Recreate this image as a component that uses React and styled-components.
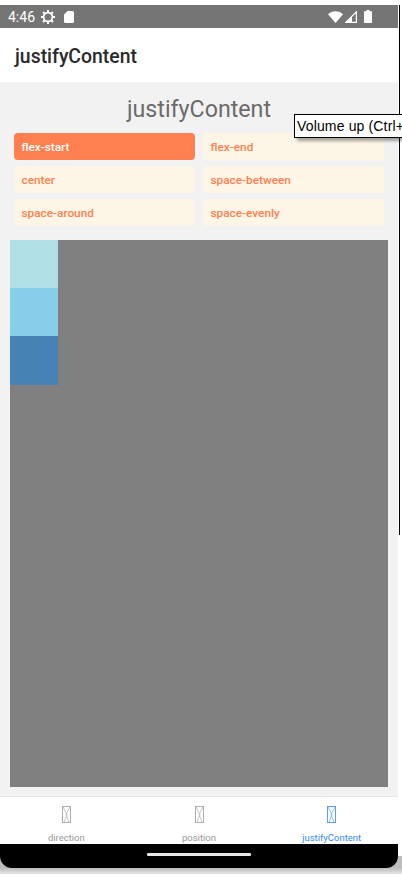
import React from 'react';
import styled, { createGlobalStyle } from 'styled-components';

const GlobalStyle = createGlobalStyle`
  html, body {
    margin: 0;
    padding: 0;
    background: #fff;
  }
  body {
    font-family: Roboto, "Noto Sans", sans-serif;
  }
`;

const Screen = styled.div`
  position: relative;
  width: 402px;
  height: 874px;
  overflow: hidden;
  background: linear-gradient(#fff 0, #fff 856px, #bdbdbd 856px, #bdbdbd 868px, #e4e4e4 874px);
`;

const Phone = styled.div`
  display: flex;
  flex-direction: column;
  width: 398px;
  height: 868px;
  padding-top: 5px;
  box-sizing: border-box;
`;

const StatusBar = styled.div`
  display: flex;
  align-items: center;
  justify-content: space-between;
  height: 23px;
  padding: 0 26px 0 8px;
  background: #757575;
  color: #fff;
  flex: none;
`;

const StatusGroup = styled.div`
  display: flex;
  align-items: center;
  gap: ${(p) => p.$gap}px;
`;

const Clock = styled.span`
  font-size: 14px;
`;

const Header = styled.header`
  display: flex;
  align-items: center;
  height: 54px;
  padding: 2px 0 0 15px;
  box-sizing: border-box;
  background: #fff;
  flex: none;
`;

const HeaderTitle = styled.h1`
  margin: 0;
  font-size: 19.4px;
  font-weight: 500;
  color: #2a2a2c;
`;

const Content = styled.main`
  display: flex;
  flex-direction: column;
  flex: 1;
  min-height: 0;
  background: #f2f2f2;
  padding: 0 10px 9px;
`;

const Title = styled.div`
  text-align: center;
  font-size: 23.2px;
  line-height: 28px;
  height: 28px;
  margin: 13px 0 10px;
  color: #6b6b6b;
`;

const Options = styled.div`
  display: grid;
  grid-template-columns: 181px 181px;
  grid-auto-rows: 27px;
  column-gap: 8px;
  row-gap: 6px;
  padding-left: 4px;
  margin-bottom: 14px;
`;

const Option = styled.div`
  display: flex;
  align-items: center;
  padding-left: 7.5px;
  border-radius: 4px;
  font-size: 11.8px;
  font-weight: 500;
  background: ${(p) => (p.$selected ? 'coral' : 'oldlace')};
  color: ${(p) => (p.$selected ? '#fff' : 'coral')};
`;

const Stage = styled.div`
  display: flex;
  flex-direction: column;
  flex: 1;
  background: #808080;
`;

const Block = styled.div`
  width: 48px;
  height: ${(p) => p.$height}px;
  background: ${(p) => p.$color};
`;

const TabBar = styled.nav`
  display: flex;
  height: 48px;
  background: #fff;
  border-top: 1px solid #e4e4e4;
  box-sizing: border-box;
  flex: none;
`;

const Tab = styled.div`
  display: flex;
  flex-direction: column;
  align-items: center;
  flex: 1;
  padding-top: 9px;
  color: ${(p) => (p.$active ? '#2f8cf5' : '#999')};
`;

const TabLabel = styled.span`
  margin-top: 9px;
  font-size: 9.5px;
  line-height: 12px;
`;

const NavBar = styled.div`
  display: flex;
  justify-content: center;
  height: 24px;
  padding-top: 9px;
  box-sizing: border-box;
  background: #000;
  border-radius: 0 0 12px 12px;
  flex: none;
`;

const HomePill = styled.div`
  width: 104px;
  height: 3px;
  background: #e8e8e8;
  border-radius: 1px;
`;

const WindowEdge = styled.div`
  position: absolute;
  left: 399px;
  top: 5px;
  width: 1px;
  height: 530px;
  background: #000;
`;

const Tooltip = styled.div`
  position: absolute;
  left: 294px;
  top: 114px;
  width: 120px;
  height: 24px;
  padding-left: 2px;
  box-sizing: border-box;
  border: 1px solid #000;
  background: #fff;
  box-shadow: 3px 3px 3px rgba(0, 0, 0, 0.35);
  font-family: "Liberation Sans", Arial, sans-serif;
  font-size: 14px;
  letter-spacing: 0.15px;
  line-height: 22px;
  color: #000;
  white-space: nowrap;
`;

const SdSvg = styled.svg`
  margin-left: 3px;
`;

const BatterySvg = styled.svg`
  margin-left: 5px;
`;

const MissingIcon = () => (
  <svg width="9" height="17" viewBox="0 0 9 17" fill="none" stroke="currentColor" strokeWidth="1" opacity="0.8">
    <rect x="0.5" y="0.5" width="8" height="16" />
    <path d="M1 1 L5 8.5 L2 16 M8 1 L4 8.5 L7 16" strokeWidth="0.7" />
  </svg>
);

const GearIcon = () => (
  <svg width="14" height="14" viewBox="0 0 14 14" fill="none" stroke="#fff">
    <circle cx="7" cy="7" r="4.4" strokeWidth="1.8" />
    <path d="M7 0v2M7 12v2M0 7h2M12 7h2M2 2l1.500 1.500M10.500 10.500L12 12M2 12l1.500-1.500M10.500 3.500L12 2" strokeWidth="2" />
  </svg>
);

const SdIcon = () => (
  <SdSvg width="10" height="12" viewBox="0 0 10 12" fill="#fff">
    <path d="M3.500 0h5A1.500 1.500 0 0 1 10 1.500v9A1.500 1.500 0 0 1 8.500 12h-7A1.500 1.500 0 0 1 0 10.500V3.500z" />
  </SdSvg>
);

const WifiIcon = () => (
  <svg width="15" height="12" viewBox="0 0 15 12" fill="#fff">
    <path d="M0 3.200C4-0.900 11-0.900 15 3.200L7.500 12z" />
  </svg>
);

const SignalIcon = () => (
  <svg width="12" height="12" viewBox="0 0 12 12">
    <path d="M11.400 0.800V11.400H0.800z" fill="none" stroke="#fff" strokeWidth="1.200" />
    <path d="M7 5.500V12H0.800z" fill="#fff" />
  </svg>
);

const BatteryIcon = () => (
  <BatterySvg width="8" height="13" viewBox="0 0 8 13" fill="#fff">
    <path d="M2.500 0h3v1.200H8V13H0V1.200h2.500z" />
  </BatterySvg>
);

const options = ['flex-start', 'flex-end', 'center', 'space-between', 'space-around', 'space-evenly'];
const blocks = [
  { color: 'powderblue', height: 48 },
  { color: 'skyblue', height: 48 },
  { color: 'steelblue', height: 49 },
];
const tabs = ['direction', 'position', 'justifyContent'];

export default function App() {
  return (
    <Screen>
      <GlobalStyle />
      <Phone>
        <StatusBar>
          <StatusGroup $gap={6}>
            <Clock>4:46</Clock>
            <GearIcon />
            <SdIcon />
          </StatusGroup>
          <StatusGroup $gap={2}>
            <WifiIcon />
            <SignalIcon />
            <BatteryIcon />
          </StatusGroup>
        </StatusBar>
        <Header>
          <HeaderTitle>justifyContent</HeaderTitle>
        </Header>
        <Content>
          <Title>justifyContent</Title>
          <Options>
            {options.map((o) => (
              <Option key={o} $selected={o === 'flex-start'}>{o}</Option>
            ))}
          </Options>
          <Stage>
            {blocks.map((b) => (
              <Block key={b.color} $color={b.color} $height={b.height} />
            ))}
          </Stage>
        </Content>
        <TabBar>
          {tabs.map((t) => (
            <Tab key={t} $active={t === 'justifyContent'}>
              <MissingIcon />
              <TabLabel>{t}</TabLabel>
            </Tab>
          ))}
        </TabBar>
        <NavBar>
          <HomePill />
        </NavBar>
      </Phone>
      <WindowEdge />
      <Tooltip>Volume up (Ctrl+=)</Tooltip>
    </Screen>
  );
}
